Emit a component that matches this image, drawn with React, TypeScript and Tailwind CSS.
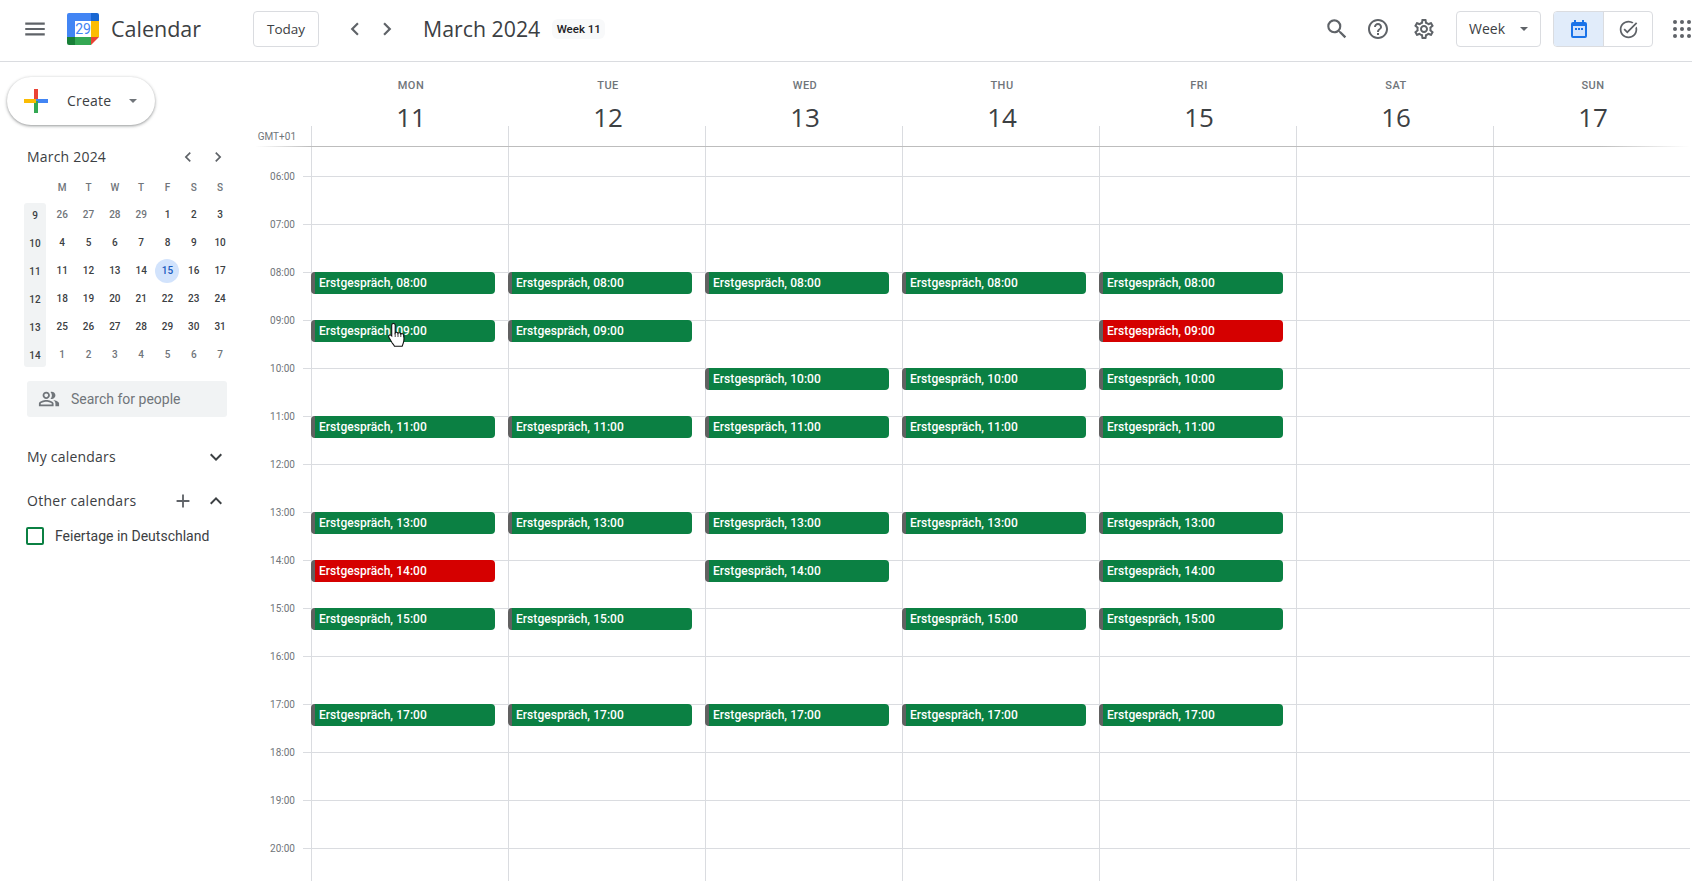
import {
  MdAdd,
  MdChevronLeft,
  MdChevronRight,
  MdExpandLess,
  MdExpandMore,
  MdHelpOutline,
  MdMenu,
  MdOutlinePeopleAlt,
  MdOutlineSettings,
  MdOutlineTaskAlt,
  MdSearch,
} from "react-icons/md";

const sans = "font-['Open_Sans',sans-serif]";
const roboto = "font-['Roboto',sans-serif]";

const days = [
  { name: "MON", date: 11, events: { 8: "g", 9: "g", 11: "g", 13: "g", 14: "r", 15: "g", 17: "g" } },
  { name: "TUE", date: 12, events: { 8: "g", 9: "g", 11: "g", 13: "g", 15: "g", 17: "g" } },
  { name: "WED", date: 13, events: { 8: "g", 10: "g", 11: "g", 13: "g", 14: "g", 17: "g" } },
  { name: "THU", date: 14, events: { 8: "g", 10: "g", 11: "g", 13: "g", 15: "g", 17: "g" } },
  { name: "FRI", date: 15, events: { 8: "g", 9: "r", 10: "g", 11: "g", 13: "g", 14: "g", 15: "g", 17: "g" } },
  { name: "SAT", date: 16, events: {} },
  { name: "SUN", date: 17, events: {} },
] as { name: string; date: number; events: Record<number, string> }[];

const hours = [6, 7, 8, 9, 10, 11, 12, 13, 14, 15, 16, 17, 18, 19, 20];

const miniWeeks = [
  [26, 27, 28, 29, 1, 2, 3],
  [4, 5, 6, 7, 8, 9, 10],
  [11, 12, 13, 14, 15, 16, 17],
  [18, 19, 20, 21, 22, 23, 24],
  [25, 26, 27, 28, 29, 30, 31],
  [1, 2, 3, 4, 5, 6, 7],
];

const pad = (n: number) => String(n).padStart(2, "0");

const Logo = () => (
  <svg width="32" height="32" viewBox="0 0 32 32">
    <path d="M2 0h22v8H8v16H0V2a2 2 0 0 1 2-2z" fill="#4285f4" />
    <path d="M24 0h6a2 2 0 0 1 2 2v6h-8z" fill="#1967d2" />
    <path d="M24 8h8v16h-8z" fill="#fbbc04" />
    <path d="M8 24h16v8H8z" fill="#34a853" />
    <path d="M0 24h8v8H2a2 2 0 0 1-2-2z" fill="#188038" />
    <path d="M24 24h8l-8 8z" fill="#ea4335" />
    <rect x="8" y="8" width="16" height="16" fill="#fff" />
    <text x="16" y="21" textAnchor="middle" fontSize="14" fontFamily="Roboto, sans-serif" fill="#4285f4">
      29
    </text>
  </svg>
);

const PlusIcon = () => (
  <svg width="24" height="24" viewBox="0 0 24 24">
    <rect x="10" y="0" width="4" height="12" fill="#ea4335" />
    <rect x="12" y="10" width="12" height="4" fill="#4285f4" />
    <rect x="10" y="12" width="4" height="12" fill="#34a853" />
    <rect x="0" y="10" width="12" height="4" fill="#fbbc04" />
  </svg>
);

const AppsIcon = () => (
  <svg width="18" height="18" viewBox="0 0 18 18" fill="#5f6368">
    {[2, 9, 16].map((cy) => [2, 9, 16].map((cx) => <circle key={`${cx}-${cy}`} cx={cx} cy={cy} r="2" />))}
  </svg>
);

const CalendarIcon = () => (
  <svg width="16" height="18" viewBox="0 0 16 18">
    <path d="M3 0h2v2h6V0h2v2h1a2 2 0 0 1 2 2v12a2 2 0 0 1-2 2H2a2 2 0 0 1-2-2V4a2 2 0 0 1 2-2h1z" fill="#1a73e8" />
    <rect x="2" y="6" width="12" height="10" fill="#d2e3fc" />
    <rect x="4" y="8" width="2" height="2" fill="#1a73e8" />
    <rect x="7" y="8" width="2" height="2" fill="#1a73e8" />
    <rect x="10" y="8" width="2" height="2" fill="#1a73e8" />
  </svg>
);

const Caret = ({ className }: { className: string }) => (
  <span className={`h-0 w-0 border-x-[4px] border-t-[4px] border-x-transparent ${className}`} />
);

const HandCursor = () => (
  <svg className="absolute left-[388px] top-[323px] z-20" width="18" height="24" viewBox="0 0 18 24">
    <path
      d="M5.500.5c1 0 1.700.8 1.700 1.800v7.500c.4-.7 2.500-1 2.800.5.500-.7 2.500-.8 2.800.7.600-.6 2.700-.5 2.900 1.200.5 3 .3 5.500-.3 7.500-.4 1.500-.8 2.400-1.300 3.600H6.500c-.5-1.200-1.300-2-2.300-3.300L1 14.500c-1.200-1.700.7-3.500 2.200-2.200l.5.500V2.300c0-1 .8-1.800 1.800-1.800z"
      fill="#fff"
      stroke="#111"
      strokeWidth="1.100"
    />
    <path d="M7.200 9.800v4.200M10 10.300v3.700M12.800 11v3M15.700 12.300v2" stroke="#111" strokeWidth="0.8" fill="none" />
  </svg>
);

const Header = () => (
  <header className="flex h-[62px] shrink-0 items-center border-b border-[#dadce0] pb-[3px]">
    <MdMenu className="ml-[22px] text-[26px] text-[#5f6368]" />
    <div className="ml-[19px]">
      <Logo />
    </div>
    <span className={`ml-3 text-[21.5px] text-[#3c4043] ${sans}`}>Calendar</span>
    <button className={`ml-[52px] h-9 w-[66px] rounded border border-[#dadce0] text-[13.5px] text-[#3c4043] ${sans}`}>Today</button>
    <MdChevronLeft className="ml-[23px] text-[26px] text-[#5f6368]" />
    <MdChevronRight className="ml-[6px] text-[26px] text-[#5f6368]" />
    <span className={`ml-[23px] text-[21.3px] text-[#3c4043] ${sans}`}>March 2024</span>
    <span className={`ml-3 h-5 w-[53px] rounded-md bg-[#f8f9fa] text-center text-[11.500px] font-medium leading-5 text-[#202124] ${roboto}`}>Week 11</span>
    <MdSearch className="ml-auto text-[26px] text-[#5f6368]" />
    <MdHelpOutline className="ml-[16px] text-[24px] text-[#5f6368]" />
    <MdOutlineSettings className="ml-[22px] text-[24px] text-[#5f6368]" />
    <button className={`ml-[20px] flex h-9 w-[85px] items-center rounded border border-[#dadce0] pl-[12px] text-sm text-[#3c4043] ${sans}`}>
      Week
      <Caret className="ml-[15px] border-t-[#5f6368]" />
    </button>
    <div className="ml-3 flex h-9 w-[100px] overflow-hidden rounded border border-[#dadce0]">
      <div className="flex w-[50px] items-center justify-center border-r border-[#dadce0] bg-[#e1ecfa]">
        <CalendarIcon />
      </div>
      <div className="flex flex-1 items-center justify-center">
        <MdOutlineTaskAlt className="text-[21px] text-[#5f6368]" />
      </div>
    </div>
    <div className="ml-5 mr-px">
      <AppsIcon />
    </div>
  </header>
);

const MiniCalendar = () => (
  <div className={roboto}>
    <div className="ml-[27px] mt-[22px] flex h-5 w-[201px] items-center">
      <span className={`text-sm tracking-[0.2px] text-[#3c4043] ${sans}`}>March 2024</span>
      <MdChevronLeft className="ml-auto text-[20px] text-[#5f6368]" />
      <MdChevronRight className="ml-[10px] text-[20px] text-[#5f6368]" />
    </div>
    <div className="ml-[49px] mt-[13px] grid h-4 grid-cols-[repeat(7,26.33px)] text-center text-[10px] font-medium leading-4 text-[#70757a]">
      {["M", "T", "W", "T", "F", "S", "S"].map((d, i) => (
        <span key={i}>{d}</span>
      ))}
    </div>
    <div className="ml-6 mt-[7px] flex">
      <div className="flex h-[164px] w-[22px] flex-col gap-3 rounded-[3px] bg-[#f1f3f4] pt-[5px] text-center text-[10px] font-medium leading-4 text-[#3c4043]">
        {[9, 10, 11, 12, 13, 14].map((w) => (
          <span key={w}>{w}</span>
        ))}
      </div>
      <div className="ml-[3px] mt-[4px] flex flex-col gap-3">
        {miniWeeks.map((week, r) => (
          <div key={r} className="grid h-4 grid-cols-[repeat(7,26.33px)] text-center text-[10px] font-medium leading-4">
            {week.map((d, c) => {
              const outside = r === 0 ? d > 20 : r === 5;
              const today = r === 2 && d === 15;
              return (
                <span key={c} className={`relative ${outside ? "text-[#70757a]" : today ? "text-[#185abc]" : "text-[#3c4043]"}`}>
                  {today && <span className="absolute left-[1px] top-[-4px] h-6 w-6 rounded-full bg-[#d2e3fc]" />}
                  <span className="relative">{d}</span>
                </span>
              );
            })}
          </div>
        ))}
      </div>
    </div>
  </div>
);

const Sidebar = () => (
  <aside className="w-[240px] shrink-0">
    <button className="ml-[7px] mt-[15px] flex h-12 w-[148px] items-center rounded-full bg-white pl-[17px] shadow-[0_1px_3px_1px_rgba(60,64,67,0.2),0_1px_2px_rgba(60,64,67,0.3)]">
      <PlusIcon />
      <span className={`ml-[19px] text-sm tracking-[0.2px] text-[#3c4043] ${sans}`}>Create</span>
      <Caret className="ml-[18px] border-t-[#70757a]" />
    </button>
    <MiniCalendar />
    <div className="ml-[27px] mt-[14px] flex h-9 w-[200px] items-center rounded-[3px] bg-[#f1f3f4] pl-[11px]">
      <MdOutlinePeopleAlt className="text-[22px] text-[#70757a]" />
      <span className={`ml-[11px] text-sm text-[#70757a] ${roboto}`}>Search for people</span>
    </div>
    <div className="ml-[27px] mt-7 flex h-6 w-[201px] items-center justify-between">
      <span className={`text-sm tracking-[0.2px] text-[#3c4043] ${sans}`}>My calendars</span>
      <MdExpandMore className="text-[24px] text-[#3c4043]" />
    </div>
    <div className="ml-[27px] mt-5 flex h-6 w-[201px] items-center">
      <span className={`text-sm tracking-[0.3px] text-[#3c4043] ${sans}`}>Other calendars</span>
      <MdAdd className="ml-auto text-[22px] text-[#5f6368]" />
      <MdExpandLess className="ml-[10px] text-[24px] text-[#3c4043]" />
    </div>
    <div className="ml-[26px] mt-[11px] flex h-6 items-center">
      <span className="h-[18px] w-[18px] rounded-[2px] border-2 border-[#0b8043]" />
      <span className={`ml-[11px] text-sm text-[#3c4043] ${roboto}`}>Feiertage in Deutschland</span>
    </div>
  </aside>
);

const EventChip = ({ hour, tone }: { hour: number; tone: string }) => (
  <div
    className={`relative z-10 -ml-px -mt-px h-[22px] w-[184px] overflow-hidden rounded-[4px] border-l-4 border-[#616161] pl-1 text-xs font-medium leading-[23px] tracking-[0.05px] text-white ${roboto} ${
      tone === "r" ? "bg-[#d50000]" : "bg-[#0b8043]"
    }`}
  >
    Erstgespräch, {pad(hour)}:00
  </div>
);

const WeekGrid = () => (
  <main className={`flex-1 ${roboto}`}>
    <div className="grid h-[84px] grid-cols-[71px_repeat(7,197px)]">
      <div className="flex items-end justify-end pb-px pr-[15px] text-[10px] leading-4 text-[#70757a]">GMT+01</div>
      {days.map((d) => (
        <div key={d.name} className="flex flex-col items-center">
          <span className="ml-[3px] mt-4 text-[11px] font-medium leading-4 tracking-[0.5px] text-[#70757a]">{d.name}</span>
          <span className={`ml-[3px] mt-[10px] text-[26px] leading-[26px] text-[#3c4043] ${sans}`}>{d.date}</span>
          <span className="-mt-1 h-5 self-start border-l border-[#dadce0]" />
        </div>
      ))}
    </div>
    <div className="h-px bg-[linear-gradient(90deg,transparent_15px,#bdbdbd_70px,#bdbdbd_1360px,transparent_1450px)]" />
    <div className="grid h-[29px] grid-cols-[71px_repeat(7,197px)]">
      <div />
      {days.map((d) => (
        <div key={d.name} className="border-l border-[#dadce0]" />
      ))}
    </div>
    {hours.map((h) => (
      <div key={h} className="grid h-12 grid-cols-[71px_repeat(7,197px)]">
        <div className="flex justify-end">
          <span className="-mt-[7px] pr-2 text-[10px] leading-4 text-[#70757a]">{pad(h)}:00</span>
          <span className="w-2 border-t border-[#dadce0]" />
        </div>
        {days.map((d) => (
          <div key={d.name} className="border-l border-t border-[#dadce0]">
            {d.events[h] && <EventChip hour={h} tone={d.events[h]} />}
          </div>
        ))}
      </div>
    ))}
  </main>
);

export default function App() {
  return (
    <div className="relative flex h-[881px] w-[1692px] flex-col overflow-hidden bg-white">
      <Header />
      <div className="flex flex-1 overflow-hidden">
        <Sidebar />
        <WeekGrid />
      </div>
      <HandCursor />
    </div>
  );
}
